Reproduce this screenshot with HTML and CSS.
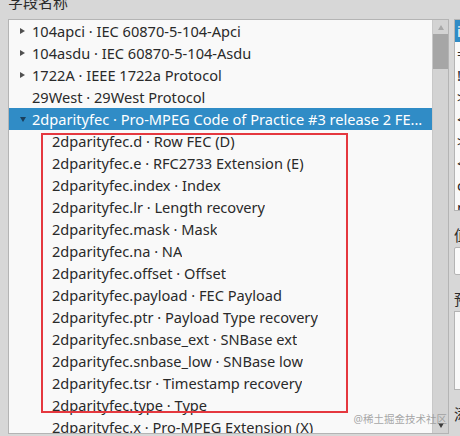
FILE: index.html
```html
<!DOCTYPE html>
<html>
<head>
<meta charset="utf-8">
<link rel="stylesheet" href="styles.css">
</head>
<body>
<div class="window">
  <div class="left">
    <div class="heading">字段名称</div>
    <div class="listbox">
      <div class="list">
        <div class="row"><span class="arrow closed"></span><span class="txt">104apci · IEC 60870-5-104-Apci</span></div>
        <div class="row"><span class="arrow closed"></span><span class="txt">104asdu · IEC 60870-5-104-Asdu</span></div>
        <div class="row"><span class="arrow closed"></span><span class="txt">1722A · IEEE 1722a Protocol</span></div>
        <div class="row"><span class="arrow none"></span><span class="txt">29West · 29West Protocol</span></div>
        <div class="row selected"><span class="arrow open"></span><span class="txt">2dparityfec · Pro-MPEG Code of Practice #3 release 2 FE...</span></div>
        <div class="row child"><span class="txt">2dparityfec.d · Row FEC (D)</span></div>
        <div class="row child"><span class="txt">2dparityfec.e · RFC2733 Extension (E)</span></div>
        <div class="row child"><span class="txt">2dparityfec.index · Index</span></div>
        <div class="row child"><span class="txt">2dparityfec.lr · Length recovery</span></div>
        <div class="row child"><span class="txt">2dparityfec.mask · Mask</span></div>
        <div class="row child"><span class="txt">2dparityfec.na · NA</span></div>
        <div class="row child"><span class="txt">2dparityfec.offset · Offset</span></div>
        <div class="row child"><span class="txt">2dparityfec.payload · FEC Payload</span></div>
        <div class="row child"><span class="txt">2dparityfec.ptr · Payload Type recovery</span></div>
        <div class="row child"><span class="txt">2dparityfec.snbase_ext · SNBase ext</span></div>
        <div class="row child"><span class="txt">2dparityfec.snbase_low · SNBase low</span></div>
        <div class="row child"><span class="txt">2dparityfec.tsr · Timestamp recovery</span></div>
        <div class="row child"><span class="txt">2dparityfec.type · Type</span></div>
        <div class="row child"><span class="txt">2dparityfec.x · Pro-MPEG Extension (X)</span></div>
      </div>
      <div class="scrollbar">
        <div class="sb-btn"><span class="sb-up"></span></div>
        <div class="sb-thumb"></div>
        <div class="sb-track"></div>
        <div class="sb-btn"><span class="sb-down"></span></div>
      </div>
      <div class="highlight"></div>
      <div class="watermark">@稀土掘金技术社区</div>
    </div>
  </div>
  <div class="right">
    <div class="rbox">
      <div class="rrow rsel">is</div>
      <div class="rrow">==</div>
      <div class="rrow">!=</div>
      <div class="rrow">&gt;</div>
      <div class="rrow">&lt;</div>
      <div class="rrow">&gt;=</div>
      <div class="rrow">&lt;=</div>
      <div class="rrow">co</div>
      <div class="rrow">ma</div>
    </div>
    <div class="rlabel">值</div>
    <div class="rinput"></div>
    <div class="rlabel">预</div>
    <div class="rbox2"></div>
    <div class="rlabel">添</div>
  </div>
</div>
</body>
</html>
```

FILE: styles.css
```css
html, body {
  margin: 0;
  padding: 0;
  background: #d7d7d7;
  width: 460px;
  height: 436px;
  overflow: hidden;
  font-family: "Noto Sans", "Noto Sans CJK SC", sans-serif;
  color: #2a2a2a;
}
.window {
  display: flex;
  margin-top: -9px;
}
.left {
  margin-left: 8px;
  width: 441px;
  flex: none;
}
.heading {
  font-size: 15px;
  line-height: 22px;
  height: 28px;
  color: #2a2a2a;
}
.listbox {
  position: relative;
  display: flex;
  height: 413px;
  border: 1px solid #b4b4b4;
  background: #f9f9f9;
  overflow: hidden;
}
.list {
  flex: 1;
  min-width: 0;
}
.row {
  height: 22px;
  line-height: 22px;
  font-size: 14.6px;
  display: flex;
  align-items: center;
  white-space: nowrap;
  padding-left: 11px;
}
.row.child {
  padding-left: 43px;
}
.row.selected {
  background: #308cc6;
  color: #ffffff;
}
.arrow {
  width: 7px;
  height: 22px;
  flex: none;
  position: relative;
  margin-right: 5px;
}
.arrow.closed::before {
  content: "";
  position: absolute;
  left: 0;
  top: 8px;
  border-left: 5px solid #505050;
  border-top: 3.5px solid transparent;
  border-bottom: 3.5px solid transparent;
}
.arrow.open::before {
  content: "";
  position: absolute;
  left: 0;
  top: 9px;
  border-top: 5px solid #1a3f5c;
  border-left: 3.5px solid transparent;
  border-right: 3.5px solid transparent;
}
.txt {
  overflow: hidden;
}
.scrollbar {
  width: 15px;
  flex: none;
  display: flex;
  flex-direction: column;
  background: #d3d3d3;
  border-left: 1px solid #c8c8c8;
}
.sb-btn {
  height: 14px;
  position: relative;
  flex: none;
}
.sb-up {
  position: absolute;
  left: 5px;
  top: 5px;
  border-bottom: 5px solid #a8a8a8;
  border-left: 3px solid transparent;
  border-right: 3px solid transparent;
}
.sb-down {
  position: absolute;
  left: 5px;
  top: 4px;
  border-top: 5px solid #3c3c3c;
  border-left: 3px solid transparent;
  border-right: 3px solid transparent;
}
.sb-thumb {
  height: 35px;
  background: #a6a6a6;
  flex: none;
}
.sb-track {
  flex: 1;
}
.highlight {
  position: absolute;
  left: 32px;
  top: 113px;
  width: 303px;
  height: 276px;
  border: 2px solid #e5383f;
}
.watermark {
  position: absolute;
  right: 1px;
  bottom: 8px;
  font-size: 10.5px;
  line-height: 12px;
  color: rgba(150, 150, 150, 0.85);
}
.right {
  margin-left: 5px;
  margin-top: 28px;
  flex: none;
  width: 40px;
  display: flex;
  flex-direction: column;
}
.rbox {
  height: 190px;
  border: 1px solid #b4b4b4;
  background: #f9f9f9;
  overflow: hidden;
}
.rrow {
  height: 22px;
  line-height: 22px;
  font-size: 15px;
  padding-left: 2px;
}
.rsel {
  background: #308cc6;
  color: #ffffff;
}
.rlabel {
  font-size: 15px;
  line-height: 20px;
  height: 20px;
  margin-top: 14px;
  color: #2a2a2a;
}
.rinput {
  margin-top: 2px;
  height: 26px;
  border: 1px solid #b4b4b4;
  border-radius: 2px;
  background: #fafafa;
}
.rbox2 {
  margin-top: 2px;
  height: 77px;
  border: 1px solid #b4b4b4;
  background: #f9f9f9;
}
```
